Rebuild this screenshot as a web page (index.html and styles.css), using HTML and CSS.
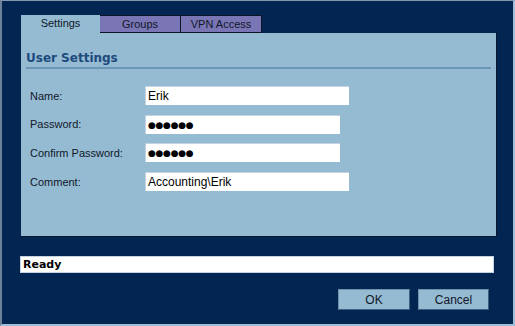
FILE: index.html
```html
<!DOCTYPE html>
<html lang="en">
<head>
    <meta charset="UTF-8">
    <title>User Settings</title>
    <link rel="stylesheet" href="styles.css">
</head>
<body>
    <div class="window">
        <div class="tabs">
            <div class="tab active">Settings</div>
            <div class="tab">Groups</div>
            <div class="tab">VPN Access</div>
        </div>
        <div class="panel">
            <h2>User Settings</h2>
            <div class="form">
                <div class="row">
                    <label>Name:</label>
                    <div class="field wide">Erik</div>
                </div>
                <div class="row">
                    <label>Password:</label>
                    <div class="field secret">●●●●●●</div>
                </div>
                <div class="row">
                    <label>Confirm Password:</label>
                    <div class="field secret">●●●●●●</div>
                </div>
                <div class="row">
                    <label>Comment:</label>
                    <div class="field wide">Accounting\Erik</div>
                </div>
            </div>
        </div>
        <div class="status">Ready</div>
        <div class="buttons">
            <button class="ok">OK</button>
            <button>Cancel</button>
        </div>
    </div>
</body>
</html>
```

FILE: styles.css
```css
body {
    margin: 0;
    font-family: "Liberation Sans", Arial, sans-serif;
}
.window {
    width: 515px;
    height: 326px;
    box-sizing: border-box;
    background-color: #022552;
    border-top: 1px solid #8596ab;
    border-left: 2px solid #6f8198;
    border-right: 2px solid #9fbfd8;
    border-bottom: 2px solid #9fbfd8;
    padding: 14px 0 0 19px;
}
.tabs {
    display: flex;
    height: 18px;
}
.tab {
    width: 81px;
    box-sizing: border-box;
    background-color: #7a76b6;
    border: 1px solid #0d1424;
    border-left: none;
    font-size: 11px;
    color: #101828;
    text-align: center;
    line-height: 16px;
}
.tab.active {
    width: 79px;
    background-color: #95bbd3;
    border: none;
    line-height: 17px;
}
.panel {
    width: 465px;
    height: 203px;
    background-color: #95bbd3;
    border-right: 1px solid #0b1730;
    border-bottom: 1px solid #0b1730;
    padding: 0 5px;
}
.panel h2 {
    margin: 0;
    padding-top: 18px;
    font-family: "DejaVu Sans", Verdana, sans-serif;
    font-size: 12px;
    color: #1c4a7c;
    border-bottom: 2px solid #6c96b7;
    line-height: 15px;
    padding-bottom: 1px;
}
.form {
    padding: 17px 0 0 4px;
}
.row {
    display: flex;
    align-items: center;
    height: 19px;
    margin-bottom: 9.7px;
}
.row label {
    width: 115px;
    font-size: 11px;
    color: #101828;
}
.field {
    width: 195px;
    height: 19px;
    box-sizing: border-box;
    background-color: #fff;
    border-top: 1px solid #c4d3df;
    border-left: 1px solid #c4d3df;
    padding-left: 2px;
    font-size: 12px;
    line-height: 18px;
    color: #000;
}
.field.wide {
    width: 204px;
}
.field.secret {
    font-family: "DejaVu Sans", sans-serif;
    font-size: 9px;
    letter-spacing: -0.3px;
}
.status {
    width: 474px;
    height: 17px;
    box-sizing: border-box;
    margin: 19px 0 0 -1px;
    background-color: #fff;
    border: 1px solid #c4d3df;
    padding-left: 2px;
    font-family: "DejaVu Sans", Verdana, sans-serif;
    font-weight: bold;
    font-size: 11px;
    line-height: 15px;
    color: #000;
}
.buttons {
    width: 476px;
    display: flex;
    justify-content: flex-end;
    gap: 8px;
    margin-top: 16px;
    padding-right: 8px;
    box-sizing: border-box;
}
.buttons button {
    width: 71px;
    height: 21px;
    background-color: #95bbd3;
    border: 1px solid #3f5f80;
    border-top-color: #6f8fab;
    border-left-color: #6f8fab;
    font-family: "Liberation Sans", Arial, sans-serif;
    font-size: 12px;
    color: #101828;
    padding: 0;
}
.buttons button.ok {
    width: 72px;
}
```
